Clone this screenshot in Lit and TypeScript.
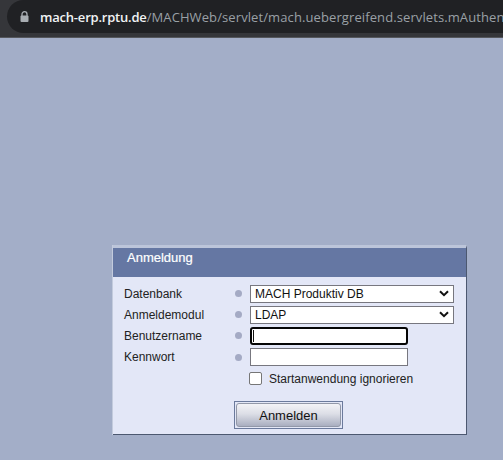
import { LitElement, html, css } from "lit";
import { customElement } from "lit/decorators.js";

const chevron = html`<svg class="chev" width="10" height="7" viewBox="0 0 10 7"><path d="M1 1.2 L5 5.2 L9 1.2" fill="none" stroke="#111" stroke-width="2"/></svg>`;

@customElement("app-root")
export class AppRoot extends LitElement {
  static styles = css`
    :host { display: block; width: 503px; height: 460px; overflow: hidden; background: #a3aec8; font-family: "Liberation Sans", Arial, sans-serif; }
    .chrome { height: 38px; box-sizing: border-box; background: #35363a; border-bottom: 1px solid #55575c; padding: 0 0 0 7px; }
    .omni { height: 33px; background: #202124; border-radius: 17px 0 0 17px; display: flex; align-items: center; padding-left: 13px; gap: 11px; white-space: nowrap; overflow: hidden; font-family: "Open Sans", "Noto Sans", sans-serif; font-size: 13px; }
    .lock { flex: none; }
    .host { color: #f1f3f4; font-weight: 600; letter-spacing: -0.2px; }
    .path { color: #9aa0a6; letter-spacing: 0.1px; }
    .page { display: flex; padding: 207px 0 0 113px; }
    .dialog { width: 354px; height: 190px; box-sizing: border-box; background: #e3e7f7; border-top: 3px solid #bcc5da; border-right: 1px solid #4c5870; border-bottom: 1px solid #4c5870; box-shadow: -1px 0 0 #c3cbdd; }
    .title { height: 29px; box-sizing: border-box; background: #6577a3; color: #fff; font-size: 13px; padding: 2px 0 0 14px; -webkit-text-stroke: 0.2px #fff; }
    .form { display: grid; grid-template-columns: 111px 15px 1fr; grid-template-rows: 21px 21px 21px 22px 21px auto; padding: 6px 0 0 11px; font-size: 12px; color: #222; align-items: center; }
    .dot { width: 7px; height: 7px; border-radius: 50%; background: #a4aac4; }
    .select { width: 204px; height: 18px; box-sizing: border-box; border: 1px solid #77777f; background: #fff; display: flex; align-items: center; justify-content: space-between; padding: 0 4px; color: #111; }
    .input { width: 158px; height: 18px; box-sizing: border-box; border: 1px solid #77777f; background: #fff; }
    .input.focus { border: 2px solid #050505; border-radius: 3px; padding: 1px 0 1px 1px; }
    .caret { display: block; width: 1px; height: 100%; background: #111; }
    .check { grid-column: 3; display: flex; align-items: center; gap: 7px; margin-left: -1px; height: 21px; }
    .box { width: 13px; height: 13px; box-sizing: border-box; border: 1px solid #767676; border-radius: 2px; background: #fff; }
    .actions { grid-column: 3; }
    .btn { width: 109px; height: 28px; margin: 12px 0 0 -16px; box-sizing: border-box; border: 1px solid #6b7a9c; padding: 1px; display: flex; }
    .btn span { flex: 1; border: 1px solid #9298a8; border-radius: 3px; background: linear-gradient(#f3f3f7, #dcdee6 45%, #a9aec0); color: #111; font-size: 13px; display: flex; align-items: center; justify-content: center; }
  `;

  render() {
    return html`
      <div class="chrome">
        <div class="omni">
          <svg class="lock" width="9" height="11" viewBox="0 0 9 11"><path d="M2 5V3.2a2.5 2.5 0 0 1 5 0V5" fill="none" stroke="#a8adb2" stroke-width="1.3"/><rect x="0.5" y="4.5" width="8" height="6.5" rx="1" fill="#a8adb2"/></svg>
          <div><span class="host">mach-erp.rptu.de</span><span class="path">/MACHWeb/servlet/mach.uebergreifend.servlets.mAuthen</span></div>
        </div>
      </div>
      <div class="page">
        <div class="dialog">
          <div class="title">Anmeldung</div>
          <div class="form">
            <div>Datenbank</div><div class="dot"></div><div class="select">MACH Produktiv DB ${chevron}</div>
            <div>Anmeldemodul</div><div class="dot"></div><div class="select">LDAP ${chevron}</div>
            <div>Benutzername</div><div class="dot"></div><div class="input focus"><span class="caret"></span></div>
            <div>Kennwort</div><div class="dot"></div><div class="input"></div>
            <div class="check"><span class="box"></span>Startanwendung ignorieren</div>
            <div class="actions"><div class="btn"><span>Anmelden</span></div></div>
          </div>
        </div>
      </div>`;
  }
}
